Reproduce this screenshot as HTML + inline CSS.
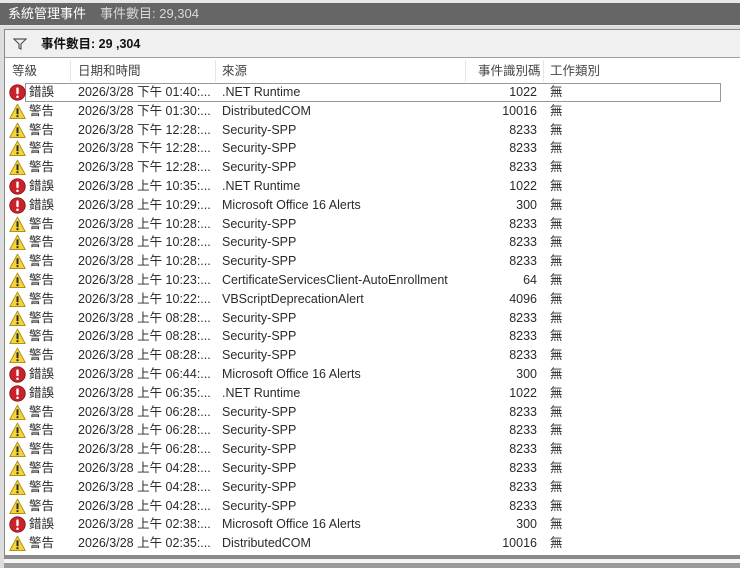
<!DOCTYPE html>
<html><head><meta charset="utf-8"><style>
*{margin:0;padding:0;box-sizing:border-box}
body{width:740px;height:568px;overflow:hidden;background:#fff;font-family:"Liberation Sans","Noto Sans CJK TC",sans-serif;font-size:12.5px;color:#2a2a2a;position:relative}
.title{position:absolute;left:0;top:0;width:740px;height:27px;background:#e8e8e8}
.title .bar{position:absolute;left:0;top:3px;width:740px;height:22px;background:#666;color:#fff;font-size:13px;line-height:22px;padding-left:8px}
.title .bar span{color:#d8d8d8;margin-left:14px}
.frame{position:absolute;left:0;top:26px;width:740px;height:542px;background:#ddd}
.panel{position:absolute;left:4px;top:29px;width:736px;height:527px;border:1px solid #8a8a8a;border-right:none;background:#fff}
.filter{position:absolute;left:5px;top:30px;width:735px;height:28px;background:#f0f0f0;border-bottom:1px solid #a0a0a0;font-size:12.5px;line-height:28px}
.filter b{position:absolute;left:36px;color:#111;font-weight:600}
.hdr{position:absolute;top:60px;height:22px;line-height:22px;color:#444}
.sep{position:absolute;top:60px;height:22px;width:1px;background:#e6e6e6}
.row{position:absolute;left:0;height:18.8px;line-height:19px;width:720px}
.row div{position:absolute;white-space:nowrap}
.ic{left:9px;top:1px;width:17px;height:17px}
.lv{left:29px}.dt{left:78px}.src{left:222px}.id{right:183px;text-align:right}.cat{left:550px}
.focus{position:absolute;left:25px;top:83px;width:696px;height:19px;border:1px solid #999}
.bot1{position:absolute;left:4px;top:556px;width:736px;height:3px;background:#8a8a8a}
.bot2{position:absolute;left:4px;top:559px;width:736px;height:4px;background:#f4f4f4}
.bot3{position:absolute;left:4px;top:563px;width:736px;height:5px;background:#9a9a9a}
</style></head><body>
<div class="title"><div class="bar">系統管理事件<span>事件數目: 29,304</span></div></div>
<div class="frame"></div>
<div class="panel"></div>
<div class="filter">
<svg style="position:absolute;left:8px;top:8px" width="14" height="12" viewBox="0 0 14 12"><path d="M1 1H13L8 6V11L6 10V6Z" fill="none" stroke="#555" stroke-width="1.2"/></svg>
<b>事件數目: 29 ,304</b></div>
<div class="hdr" style="left:12px">等級</div>
<div class="hdr" style="left:78px">日期和時間</div>
<div class="hdr" style="left:222px">來源</div>
<div class="hdr" style="left:478px">事件識別碼</div>
<div class="hdr" style="left:550px">工作類別</div>
<div class="sep" style="left:70px"></div><div class="sep" style="left:215px"></div><div class="sep" style="left:465px"></div><div class="sep" style="left:543px"></div>
<div class="focus"></div>
<div id="rows"></div>
<div class="bot1"></div><div class="bot2"></div><div class="bot3"></div>
<script>
var E='<svg viewBox="0 0 16 16" width="17" height="17"><circle cx="8" cy="8" r="7.3" fill="#c8222a" stroke="#8a1318" stroke-width=".8"/><rect x="6.9" y="3.2" width="2.2" height="6.5" rx="1" fill="#fff"/><circle cx="8" cy="12" r="1.2" fill="#fff"/></svg>';
var W='<svg viewBox="0 0 16 16" width="17" height="17"><path d="M8 1L15.3 14.6H0.7Z" fill="#f5d33a" stroke="#a88a10" stroke-width=".8" stroke-linejoin="round"/><rect x="7.1" y="5" width="1.8" height="5.5" fill="#222"/><rect x="7.1" y="11.5" width="1.8" height="1.8" fill="#222"/></svg>';
var d=[
['e','下午 01:40','.NET Runtime',1022],['w','下午 01:30','DistributedCOM',10016],['w','下午 12:28','Security-SPP',8233],['w','下午 12:28','Security-SPP',8233],['w','下午 12:28','Security-SPP',8233],
['e','上午 10:35','.NET Runtime',1022],['e','上午 10:29','Microsoft Office 16 Alerts',300],['w','上午 10:28','Security-SPP',8233],['w','上午 10:28','Security-SPP',8233],['w','上午 10:28','Security-SPP',8233],
['w','上午 10:23','CertificateServicesClient-AutoEnrollment',64],['w','上午 10:22','VBScriptDeprecationAlert',4096],['w','上午 08:28','Security-SPP',8233],['w','上午 08:28','Security-SPP',8233],['w','上午 08:28','Security-SPP',8233],
['e','上午 06:44','Microsoft Office 16 Alerts',300],['e','上午 06:35','.NET Runtime',1022],['w','上午 06:28','Security-SPP',8233],['w','上午 06:28','Security-SPP',8233],['w','上午 06:28','Security-SPP',8233],
['w','上午 04:28','Security-SPP',8233],['w','上午 04:28','Security-SPP',8233],['w','上午 04:28','Security-SPP',8233],['e','上午 02:38','Microsoft Office 16 Alerts',300],['w','上午 02:35','DistributedCOM',10016]];
var h='';d.forEach(function(r,i){var t=83+i*18.8;h+='<div class="row" style="top:'+t+'px"><div class="ic">'+(r[0]=='e'?E:W)+'</div><div class="lv">'+(r[0]=='e'?'錯誤':'警告')+'</div><div class="dt">2026/3/28 '+r[1]+':...</div><div class="src">'+r[2]+'</div><div class="id">'+r[3]+'</div><div class="cat">無</div></div>';});
document.getElementById('rows').innerHTML=h;
</script>
</body></html>
